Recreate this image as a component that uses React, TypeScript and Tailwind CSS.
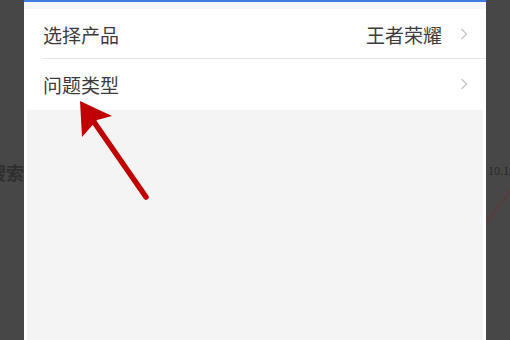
import React from "react";

const font = { fontFamily: '"Noto Sans CJK SC", "Noto Sans", sans-serif' };

function Chevron() {
  return (
    <svg width="8" height="12" viewBox="0 0 8 12" className="shrink-0">
      <path d="M1.5 1 L6.5 6 L1.5 11" fill="none" stroke="#c4c4c4" strokeWidth="1.3" />
    </svg>
  );
}

function Row({ label, value, divider }: { label: string; value?: string; divider?: boolean }) {
  return (
    <div className="relative flex h-[50px] items-center pl-[19px] pr-[18px]">
      <span className="text-[19px] leading-none text-[#3c3c3c]">{label}</span>
      <div className="ml-auto flex items-center gap-[18px]">
        {value && <span className="text-[19px] leading-none text-[#3c3c3c]">{value}</span>}
        <Chevron />
      </div>
      {divider && <div className="absolute bottom-0 left-[18px] right-0 h-px bg-[#e8e8e8]" />}
    </div>
  );
}

export default function App() {
  return (
    <div className="relative flex h-[340px] w-[510px] overflow-hidden bg-[#474747]" style={font}>
      {/* dimmed page behind the sheet, cut at the edges */}
      <div className="w-[24px] shrink-0 overflow-hidden pt-[163px]">
        <div className="flex justify-end whitespace-nowrap text-[18px] font-bold leading-none text-[#2f2f2f]">
          搜索
        </div>
      </div>

      <div className="flex w-[462px] shrink-0 flex-col bg-white">
        <div className="h-[2px] bg-[#3d7ee0]" />
        <div className="h-[7px] bg-[#f5f6f8]" />
        <Row label="选择产品" value="王者荣耀" divider />
        <Row label="问题类型" />
        <div className="mx-[3px] mt-[1px] flex-1 bg-[#f4f4f4]" />
      </div>

      <div className="relative flex-1 overflow-hidden">
        <div className="pl-[2px] pt-[165px] whitespace-nowrap text-[11px] leading-none text-[#2c2c2c]">
          10.1K
        </div>
        <svg className="absolute left-0 top-[185px]" width="24" height="45" viewBox="0 0 24 45">
          <path d="M0 38 L24 5" stroke="#5a3c3c" strokeWidth="2" fill="none" />
        </svg>
      </div>

      {/* red annotation arrow */}
      <svg className="pointer-events-none absolute left-0 top-0" width="510" height="340" viewBox="0 0 510 340">
        <line x1="146" y1="197" x2="94" y2="122" stroke="#c00000" strokeWidth="5.5" strokeLinecap="round" />
        <polygon points="80,101 112,116 97,120 82,137" fill="#c00000" />
      </svg>
    </div>
  );
}
